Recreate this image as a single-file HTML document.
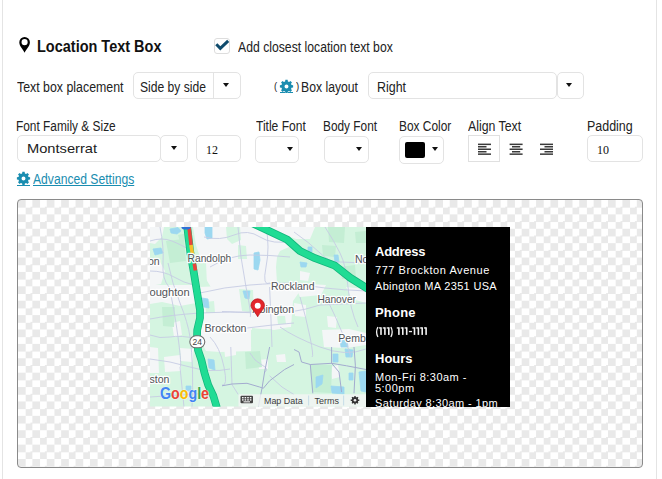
<!DOCTYPE html>
<html><head><meta charset="utf-8">
<style>
html,body{margin:0;padding:0;background:#fff;width:662px;height:479px;overflow:hidden;}
body{position:relative;font-family:"Liberation Sans",sans-serif;color:#222;}
.a{position:absolute;white-space:nowrap;}
.lbl{font-size:13px;letter-spacing:-0.35px;color:#222;line-height:16px;}
.box{position:absolute;border:1px solid #e3e3e3;border-radius:5px;box-sizing:border-box;background:#fff;}
.arr{position:absolute;width:0;height:0;border-left:3px solid transparent;border-right:3px solid transparent;border-top:4.5px solid #111;}
.gear{position:absolute;}
.ib{left:9px;font-size:11px;line-height:13px;color:#fff;}
</style></head><body>
<svg width="0" height="0" style="position:absolute"><defs>
<g id="gr"><path fill="#1a8db0" fill-rule="evenodd" d="M-1.25 -6.4H1.25L1.55 -4.6L2.9 -4.05L4.35 -5.15L6.1 -3.4L5.0 -1.95L5.55 -0.6L7.35 -0.3V2.2L5.55 2.5L5.0 3.85L6.1 5.3L4.35 7.05L2.9 5.95L1.55 6.5L1.25 8.3H-1.25L-1.55 6.5L-2.9 5.95L-4.35 7.05L-6.1 5.3L-5.0 3.85L-5.55 2.5L-7.35 2.2V-0.3L-5.55 -0.6L-5.0 -1.95L-6.1 -3.4L-4.35 -5.15L-2.9 -4.05L-1.55 -4.6Z M0 -1.25A2.2 2.2 0 1 0 0 3.15A2.2 2.2 0 1 0 0 -1.25Z"/></g>
</defs></svg>
<!-- outer panel borders -->
<div class="a" style="left:2px;top:0;width:1px;height:479px;background:#e4e4e4"></div>
<div class="a" style="left:656px;top:0;width:1px;height:479px;background:#e4e4e4"></div>

<!-- Heading -->
<svg class="a" style="left:19px;top:36px" width="12" height="18" viewBox="0 0 12 18">
  <path d="M5.6 16.8C4.2 13.6 0.3 10.4 0.3 6.3A5.3 5.3 0 0 1 10.9 6.3C10.9 10.4 7 13.6 5.6 16.8Z M5.6 3.1A3.05 3.05 0 1 0 5.6 9.2A3.05 3.05 0 1 0 5.6 3.1Z" fill="#000" fill-rule="evenodd"/>
</svg>


<!-- checkbox -->
<div class="box" style="left:214px;top:38px;width:16px;height:16px;border-radius:3px;border-color:#ddd"></div>
<svg class="a" style="left:215px;top:39px" width="16" height="14" viewBox="0 0 16 14">
  <path d="M1.3 5.3L5.3 9.3L13.2 1.8" stroke="#0f4b6c" stroke-width="3" fill="none"/>
</svg>

<!-- Row 2 -->
<div class="box" style="left:133px;top:72px;width:108px;height:27px"></div>
<div class="a" style="left:213px;top:73px;width:1px;height:25px;background:#e3e3e3"></div>
<div class="arr" style="left:223px;top:83px"></div>

<div class="a lbl" style="left:273.8px;top:79.5px;font-size:12px;transform:scale(0.8,0.86);transform-origin:0 0">(</div>
<svg class="a" style="left:278px;top:78px" width="17" height="17" viewBox="-8.5 -7.5 17 17"><use href="#gr" transform="translate(0 0.95) scale(0.9) translate(0 -0.95)"/></svg>
<div class="a" style="left:280px;top:92px;width:5px;height:1.2px;background:#1a8db0"></div>
<div class="a" style="left:288px;top:92px;width:5px;height:1.2px;background:#1a8db0"></div>
<div class="a lbl" style="left:295.6px;top:79.5px;font-size:12px;transform:scale(0.8,0.86);transform-origin:0 0">)</div>
<div class="box" style="left:368px;top:72px;width:189px;height:27px"></div>
<div class="box" style="left:557px;top:72px;width:27px;height:27px"></div>
<div class="arr" style="left:566px;top:83px"></div>

<!-- Row 3 labels -->

<!-- Row 3 inputs -->
<div class="box" style="left:17px;top:135px;width:144px;height:27px"></div>
<div class="box" style="left:160px;top:135px;width:28px;height:27px"></div>
<div class="arr" style="left:170.5px;top:146px"></div>
<div class="box" style="left:196px;top:135px;width:45px;height:27px"></div>
<div class="a" style="left:206px;top:143px;font-family:'Liberation Serif',serif;font-size:12px;color:#111;line-height:14px">12</div>

<div class="box" style="left:255px;top:136px;width:44px;height:27px"></div>
<div class="arr" style="left:287px;top:147px"></div>
<div class="box" style="left:324px;top:136px;width:45px;height:27px"></div>
<div class="arr" style="left:356px;top:147px"></div>

<div class="box" style="left:399px;top:136px;width:45px;height:28px"></div>
<div class="a" style="left:405px;top:142px;width:20px;height:16px;background:#000;border-radius:2px"></div>
<div class="arr" style="left:431.5px;top:147px"></div>

<div class="a" style="left:468px;top:135px;width:32px;height:27px;border:1px solid #e0e0e0;box-sizing:border-box"></div>
<svg class="a" style="left:470px;top:140px" width="90" height="18" viewBox="470 140 90 18">
 <g fill="#3a3a3a">
  <rect x="478" y="143.6" width="13" height="1.5"/><rect x="478" y="146" width="8.5" height="1.5"/><rect x="478" y="148.5" width="13" height="1.5"/><rect x="478" y="151" width="8.5" height="1.5"/><rect x="478" y="153.4" width="13" height="1.5"/>
  <rect x="509.6" y="143.6" width="13" height="1.5"/><rect x="512" y="146" width="8.2" height="1.5"/><rect x="509.6" y="148.5" width="13" height="1.5"/><rect x="512" y="151" width="8.2" height="1.5"/><rect x="509.6" y="153.4" width="13" height="1.5"/>
  <rect x="540" y="143.6" width="13" height="1.5"/><rect x="544.5" y="146" width="8.5" height="1.5"/><rect x="540" y="148.5" width="13" height="1.5"/><rect x="544.5" y="151" width="8.5" height="1.5"/><rect x="540" y="153.4" width="13" height="1.5"/>
 </g>
</svg>

<div class="box" style="left:587px;top:135px;width:56px;height:27px"></div>
<div class="a" style="left:597px;top:143px;font-family:'Liberation Serif',serif;font-size:12px;color:#111;line-height:14px">10</div>

<!-- Advanced settings -->

<!--LABELS-->
<div class="a" style="left:36.60px;top:38.76px;font-size:16px;font-weight:bold;color:#111;line-height:1;transform:scaleX(0.9052);transform-origin:0 0;">Location Text Box</div>
<div class="a" style="left:237.50px;top:40.04px;font-size:14px;font-weight:normal;color:#222;line-height:1;transform:scaleX(0.8725);transform-origin:0 0;">Add closest location text box</div>
<div class="a" style="left:16.75px;top:80.04px;font-size:14px;font-weight:normal;color:#222;line-height:1;transform:scaleX(0.8827);transform-origin:0 0;">Text box placement</div>
<div class="a" style="left:139.60px;top:80.04px;font-size:14px;font-weight:normal;color:#222;line-height:1;transform:scaleX(0.8650);transform-origin:0 0;">Side by side</div>
<div class="a" style="left:301.00px;top:80.04px;font-size:14px;font-weight:normal;color:#222;line-height:1;transform:scaleX(0.8720);transform-origin:0 0;">Box layout</div>
<div class="a" style="left:377.00px;top:79.94px;font-size:14px;font-weight:normal;color:#222;line-height:1;transform:scaleX(0.8881);transform-origin:0 0;">Right</div>
<div class="a" style="left:16.00px;top:118.84px;font-size:14px;font-weight:normal;color:#222;line-height:1;transform:scaleX(0.8485);transform-origin:0 0;">Font Family &amp; Size</div>
<div class="a" style="left:255.50px;top:118.84px;font-size:14px;font-weight:normal;color:#222;line-height:1;transform:scaleX(0.8599);transform-origin:0 0;">Title Font</div>
<div class="a" style="left:323.20px;top:118.84px;font-size:14px;font-weight:normal;color:#222;line-height:1;transform:scaleX(0.8471);transform-origin:0 0;">Body Font</div>
<div class="a" style="left:398.50px;top:118.84px;font-size:14px;font-weight:normal;color:#222;line-height:1;transform:scaleX(0.8502);transform-origin:0 0;">Box Color</div>
<div class="a" style="left:468.00px;top:118.84px;font-size:14px;font-weight:normal;color:#222;line-height:1;transform:scaleX(0.8791);transform-origin:0 0;">Align Text</div>
<div class="a" style="left:586.80px;top:118.84px;font-size:14px;font-weight:normal;color:#222;line-height:1;transform:scaleX(0.8901);transform-origin:0 0;">Padding</div>
<div class="a" style="left:26.50px;top:142.18px;font-size:13px;font-weight:normal;color:#222;line-height:1;transform:scaleX(1.1280);transform-origin:0 0;">Montserrat</div>
<div class="a" style="left:33.00px;top:171.64px;font-size:14px;font-weight:normal;color:#1a8db0;line-height:1;transform:scaleX(0.8671);transform-origin:0 0;text-decoration:underline;">Advanced Settings</div>
<!--/LABELS-->
<svg class="a" style="left:15px;top:170.4px" width="17" height="17" viewBox="-8.5 -7.5 17 17"><use href="#gr" transform="translate(0 0.95) scale(0.9) translate(0 -0.95)"/></svg>
<div class="a" style="left:16.5px;top:185px;width:13px;height:1.2px;background:#1a8db0"></div>
<!-- Preview box -->
<div class="a" style="left:17px;top:199px;width:626px;height:269px;border:1px solid #8a8a8a;border-radius:4px;box-sizing:border-box;
  background-color:#fff;
  background-image:conic-gradient(#fff 0 90deg,#e9e9e9 0 180deg,#fff 0 270deg,#e9e9e9 0);background-size:14.4px 14.4px;background-position:0 0;"></div>

<!-- map -->
<svg class="a" style="left:150px;top:227px" width="216" height="180" viewBox="0 0 216 180">
<defs><clipPath id="mc"><rect width="216" height="179.5"/></clipPath></defs>
<g clip-path="url(#mc)">
<rect width="216" height="180" fill="#d5f5e1"/>
<!-- white / urban areas -->
<g fill="#f4f6f7">
 <path d="M43 0H140L139 20L130 24L127 30L126 40L127 56L118 62L96 64L78 60L62 62L56 52L52 36L46 18Z"/>
 <path d="M118 58L150 56L152 64L120 66Z"/>
 <path d="M150 44L160 46L158 54L150 53Z"/>
 <path d="M0 0H14L12 10L5 17L0 16Z"/>
 <path d="M0 31L9 33L15 44L11 57L0 59Z"/>
 <path d="M0 58L44 58L46 76L30 79L12 75L0 77Z"/>
 <path d="M50 60L130 56L146 56L150 64L143 74L141 100L124 103L102 101L101 124L70 125L56 124L52 116L50 98L48 80Z"/>
 <path d="M134 0H165L160 12L146 12L136 8Z"/>
 <path d="M144 56L176 58L171 68L150 70Z"/>
 <path d="M177 89L187 90L186 101L178 100Z"/>
 <path d="M172 103L199 102L216 106V118L196 121L174 120Z"/>
 <path d="M144 76L156 78L156 90L145 89Z"/>
 <path d="M0 120L8 121L9 146L0 146Z"/>
 <path d="M14 130L30 128L31 144L15 145Z"/>
 <path d="M30 121L44 122L42 135L31 134Z"/>
 <path d="M108 133L118 132L118 142L109 142Z"/>
 <path d="M126 128L135 127L136 135L127 135Z"/>
 <path d="M74 118L86 116L86 128L75 130Z"/>
 <path d="M196 60L216 62V76L202 72Z"/>
 <path d="M22 96L30 94L32 108L24 110Z"/>
 <path d="M180 140L188 138L190 150L182 152Z"/>
</g>
<!-- lighter green bits inside urban -->
<g fill="#d5f5e1">
 <path d="M89 62L103 63L104 86L92 84Z"/>
 <path d="M55 75L64 74L65 86L56 86Z"/>
 <path d="M127 89L135 89L136 97L128 97Z"/>
 <path d="M76 0L90 0L91 13L82 17L77 12Z"/>
 <path d="M88 18L96 19L97 32L88 32Z"/>
 <path d="M46 36L56 36L57 58L48 60Z"/>
 <path d="M101 103L122 102L124 120L101 120Z"/>
 <path d="M132 101L146 100V120L132 120Z"/>
</g>
<!-- darker green -->
<g fill="#c4eed4">
 <path d="M178 0H195L194 16L179 15Z"/>
 <path d="M205 5L216 4V16L206 16Z"/>
 <path d="M172 18L186 19L185 30L173 29Z"/>
 <path d="M160 137L182 138L181 166L162 165Z"/>
 <path d="M16 14L34 12L36 34L20 36Z"/>
 <path d="M12 80L25 80L24 100L13 99Z"/>
 <path d="M28 8L38 6L38 14L30 15Z"/>
 <path d="M95 125L110 124L112 140L96 142Z"/>
 <path d="M190 40L205 38L206 52L192 52Z"/>
</g>
<!-- water -->
<g fill="#9cd8f0" stroke="#9cd8f0" stroke-width="0.8" stroke-linejoin="round">
 <path d="M20 2L28 0.5L31 4L27 7L21 6Z"/>
 <path d="M3 22L11 21L13 26L5 28Z"/>
 <path d="M55 0L62 0L62 11L57 12L55 6Z"/>
 <path d="M104 26L109 25L110 33L108 43L104 42Z"/>
 <path d="M158 20L162 20L162 25L158 25Z"/>
 <path d="M184 28L188 28L189 35L185 35Z"/>
 <path d="M150 35L157 36L156 40L151 40Z"/>
 <path d="M52 71L58 72L59 81L54 80Z"/>
 <path d="M93 64L100 64L99 72L95 71Z"/>
 <path d="M190 112L197 112L198 120L191 120Z"/>
 <path d="M58 132L64 133L65 143L59 141Z"/>
 <path d="M36 159L41 159L41 164L36 164Z"/>
 <path d="M166 150L173 148L172 157L166 161Z"/>
 <path d="M183 127L188 127L188 135L183 135Z"/>
 <path d="M195 122L203 123L202 130L196 130Z"/>
 <path d="M199 146L203 146L203 153L199 153Z"/>
 <path d="M209 145L216 144V165L211 164Z"/>
 <path d="M181 159L194 160L194 167L182 166Z"/>
</g>
<!-- roads -->
<g fill="none" stroke="#c6cce3" stroke-width="0.9" stroke-linejoin="round">
 <path d="M10 0Q14 20 13 36T19 60Q24 80 28 110T30 140L34 180"/>
 <path d="M0 14Q12 10 22 14T42 24"/>
 <path d="M0 44Q14 44 24 50T44 58"/>
 <path d="M18 36Q22 56 30 76T40 110Q44 140 42 180"/>
 <path d="M54 10Q70 14 84 8T110 10T144 14"/>
 <path d="M60 40Q80 28 100 28T140 30"/>
 <path d="M50 66Q74 60 100 58T144 56Q170 62 216 64"/>
 <path d="M88 0Q90 30 96 60T100 90"/>
 <path d="M116 0Q120 20 116 40T120 56"/>
 <path d="M144 5Q160 16 170 26T190 35L216 36"/>
 <path d="M175 0Q184 14 190 26T198 60T208 100"/>
 <path d="M0 92Q20 88 50 86T110 86T170 78L216 76"/>
 <path d="M72 84.5Q100 86 120 84T144 86"/>
 <path d="M97 101Q120 98 144 96"/>
 <path d="M119.6 60Q121 90 122 120"/>
 <path d="M0 132Q20 134 40 140T80 142"/>
 <path d="M150 70Q156 90 160 110T162 130"/>
 <path d="M175 68Q186 90 194 110T200 130"/>
 <path d="M0 170Q30 168 60 166"/>
 <path d="M130 100Q144 110 170 120T216 122"/>
 <path d="M80.8 120L82 157.6L88.3 167.6"/>
 <path d="M119.6 148.8L132 160L144 167.6"/>
 <path d="M100 126Q104 134 112 138T114 146"/>
 <path d="M60 110Q70 120 74 140T72 158"/>
 <path d="M0 108Q10 112 20 110T50 112"/>
</g>
<g fill="none" stroke="#a3abcf" stroke-width="1" stroke-linejoin="round">
 <path d="M72 158.8L82 157L97 156.3L109.6 160L113.3 161.3"/>
 <path d="M113.3 161.3L119.6 153.8L134.6 142.5L144 137.5"/>
 <path d="M119.6 120L114.6 145L112 161.3L108.3 180"/>
 <path d="M144 122.5L149 125L151.5 135L160.3 137.5L181.6 136.3L196.6 138.8L216 142.5"/>
 <path d="M160.3 137.5L162.8 166.3"/>
 <path d="M181.6 120L181.6 136.3L189 145L191.6 165"/>
 <path d="M204 120L205.4 138.8L204 166.3"/>
</g>
<!-- highway 24 -->
<path d="M37 -2L40.4 26L43.4 43L47.5 68L50 83L50 91L47.2 103L47 113L48 123L51.4 133L54.5 146L58.2 158L63.4 169L67 181" fill="none" stroke="#12b57c" stroke-width="7.7" stroke-linejoin="round"/>
<path d="M37 -2L40.4 26L43.4 43L47.5 68L50 83L50 91L47.2 103L47 113L48 123L51.4 133L54.5 146L58.2 158L63.4 169L67 181" fill="none" stroke="#20dc94" stroke-width="6.2" stroke-linejoin="round"/>
<!-- traffic colours on 24 -->
<path d="M39 0L41 18" stroke="#e8453c" stroke-width="3.6" fill="none"/>
<path d="M41 18L42.4 27" stroke="#f7c02c" stroke-width="3.6" fill="none"/>
<path d="M44.3 36.5L45.4 43.5" stroke="#e8453c" stroke-width="3.6" fill="none"/>
<ellipse cx="36" cy="0" rx="4.6" ry="2.6" fill="#2f6fd6"/>
<!-- NE highway -->
<path d="M102 -4L137 12.5L150 24L165 31.2L185 38.7L200 50.6L218 62" fill="none" stroke="#12b57c" stroke-width="7.8" stroke-linejoin="round"/>
<path d="M102 -4L137 12.5L150 24L165 31.2L185 38.7L200 50.6L218 62" fill="none" stroke="#20dc94" stroke-width="6.2" stroke-linejoin="round"/>
<!-- labels -->
<g font-family="Liberation Sans" font-size="10.5" fill="#505357" stroke="#fff" stroke-width="2.6" stroke-opacity="0.95" paint-order="stroke" stroke-linejoin="round">
 <text x="37.6" y="35" textLength="43.7" lengthAdjust="spacingAndGlyphs">Randolph</text>
 <text x="9.6" y="38" text-anchor="end">ton</text>
 <text x="139" y="69.4" textLength="50.6" lengthAdjust="spacingAndGlyphs" transform="translate(-150 0)">Stoughton</text>
 <text x="120.9" y="63" textLength="43.6" lengthAdjust="spacingAndGlyphs">Rockland</text>
 <text x="167.4" y="76" textLength="38.6" lengthAdjust="spacingAndGlyphs">Hanover</text>
 <text x="205" y="36">Norwell</text>
 <text x="144" y="85.7" text-anchor="end">Abington</text>
 <text x="54.5" y="104.8" textLength="42" lengthAdjust="spacingAndGlyphs">Brockton</text>
 <text x="19.4" y="156.4" text-anchor="end">Easton</text>
 <text x="188.3" y="114.8">Pembroke</text>
</g>
<!-- route shield -->
<rect x="39.8" y="108.8" width="15" height="12" rx="6" fill="#fff" stroke="#6f6f6f" stroke-width="1.1"/>
<text x="47.3" y="118.2" font-family="Liberation Sans" font-size="8.5" fill="#444" text-anchor="middle">24</text>
<!-- pin -->
<path d="M107.7 89.8C105.6 85.6 100.9 81.6 100.9 78.6A6.8 6.8 0 0 1 114.5 78.6C114.5 81.6 109.8 85.6 107.7 89.8Z" fill="#e3262a" stroke="#b0151b" stroke-width="0.7"/>
<circle cx="107.7" cy="78.8" r="3" fill="#fff"/>
<!-- Google logo -->
<g font-family="Liberation Sans" font-size="16" font-weight="bold" stroke="#fff" stroke-width="1.2" paint-order="stroke" stroke-opacity="0.5">
 <text x="10" y="172.4" textLength="49" lengthAdjust="spacingAndGlyphs"><tspan fill="#4285f4">G</tspan><tspan fill="#ea4335">o</tspan><tspan fill="#fbbc05">o</tspan><tspan fill="#4285f4">g</tspan><tspan fill="#34a853">l</tspan><tspan fill="#ea4335">e</tspan></text>
</g>
<!-- attribution bar -->
<rect x="88.5" y="167.3" width="128" height="13" fill="#f5f5f5" fill-opacity="0.78"/>
<rect x="90.5" y="168.8" width="12.5" height="7.5" rx="1" fill="#444"/>
<g fill="#f5f5f5"><rect x="92" y="170" width="1.6" height="1.4"/><rect x="94.6" y="170" width="1.6" height="1.4"/><rect x="97.2" y="170" width="1.6" height="1.4"/><rect x="99.8" y="170" width="1.6" height="1.4"/><rect x="92" y="172.2" width="1.6" height="1.4"/><rect x="94.6" y="172.2" width="1.6" height="1.4"/><rect x="97.2" y="172.2" width="1.6" height="1.4"/><rect x="99.8" y="172.2" width="1.6" height="1.4"/><rect x="93.5" y="174.3" width="6.5" height="1.1"/></g>
<g font-family="Liberation Sans" font-size="9.5" fill="#3c3c3c">
 <text x="114" y="176.8" textLength="38.6" lengthAdjust="spacingAndGlyphs">Map Data</text>
 <text x="164.5" y="176.8" textLength="24.4" lengthAdjust="spacingAndGlyphs">Terms</text>
</g>
<rect x="158.3" y="168.5" width="0.8" height="10" fill="#bcd7e6"/>
<rect x="193.3" y="168.5" width="0.8" height="10" fill="#bcd7e6"/>
<g transform="translate(205,173.3)"><circle r="3.2" fill="#333"/><circle r="1.3" fill="#eee"/><g stroke="#333" stroke-width="1.4"><path d="M0 -4.3V4.3M-4.3 0H4.3M-3 -3L3 3M3 -3L-3 3"/></g><circle r="1.3" fill="#eee"/></g>
</g>
</svg>
<!-- info box -->
<div class="a" style="left:366px;top:227px;width:144px;height:179.5px;background:#000;overflow:hidden;color:#fff">
 <div class="a ib" style="top:18px;font-weight:bold;font-size:13px;letter-spacing:-0.25px">Address</div>
 <div class="a ib" style="top:37px;letter-spacing:0.55px">777 Brockton Avenue</div>
 <div class="a ib" style="top:53px;letter-spacing:0.32px">Abington MA 2351 USA</div>
 <div class="a ib" style="top:79px;font-weight:bold;font-size:13px;letter-spacing:0.2px">Phone</div>
 <div class="a ib" style="top:125px;font-weight:bold;font-size:13px;">Hours</div>
 <div class="a ib" style="top:144px;letter-spacing:0.47px">Mon-Fri 8:30am -</div>
 <div class="a ib" style="top:155px;letter-spacing:0.47px">5:00pm</div>
 <div class="a ib" style="top:170px;letter-spacing:0.38px">Saturday 8:30am - 1pm</div>
</div>
<svg class="a" style="left:370px;top:324px" width="62" height="16" viewBox="370 324 62 16"><g fill="#f2f2f2"><rect x="380.20" y="327.3" width="1.6" height="7.6"/><rect x="378.90" y="327.3" width="2" height="1.3"/><rect x="384.10" y="327.3" width="1.6" height="7.6"/><rect x="382.80" y="327.3" width="2" height="1.3"/><rect x="388.00" y="327.3" width="1.6" height="7.6"/><rect x="386.70" y="327.3" width="2" height="1.3"/><rect x="398.10" y="327.3" width="1.6" height="7.6"/><rect x="396.80" y="327.3" width="2" height="1.3"/><rect x="402.00" y="327.3" width="1.6" height="7.6"/><rect x="400.70" y="327.3" width="2" height="1.3"/><rect x="405.90" y="327.3" width="1.6" height="7.6"/><rect x="404.60" y="327.3" width="2" height="1.3"/><rect x="413.70" y="327.3" width="1.6" height="7.6"/><rect x="412.40" y="327.3" width="2" height="1.3"/><rect x="417.60" y="327.3" width="1.6" height="7.6"/><rect x="416.30" y="327.3" width="2" height="1.3"/><rect x="421.40" y="327.3" width="1.6" height="7.6"/><rect x="420.10" y="327.3" width="2" height="1.3"/><rect x="425.30" y="327.3" width="1.6" height="7.6"/><rect x="424.00" y="327.3" width="2" height="1.3"/><rect x="408.9" y="330.9" width="3.1" height="1.3"/></g><g fill="none" stroke="#f2f2f2" stroke-width="1.3"><path d="M377.9 327.0Q375.3 332 377.9 337.0"/><path d="M390.9 327.0Q393.5 332 390.9 337.0"/></g></svg>
</body></html>
